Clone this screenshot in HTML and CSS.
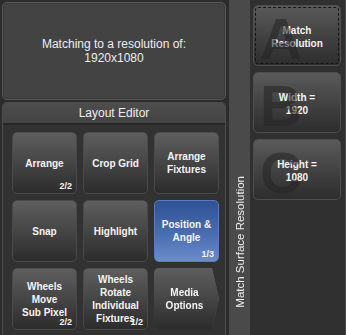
FILE: index.html
```html
<!DOCTYPE html>
<html lang="en">
<head>
    <meta charset="UTF-8">
    <title>Layout Editor</title>
    <link rel="stylesheet" href="styles.css">
</head>
<body>
<div class="screen">
    <div class="left-col">
        <div class="info-panel">
            <p>Matching to a resolution of:<br>1920x1080</p>
        </div>
        <div class="layout-panel">
            <div class="layout-head">Layout Editor</div>
            <div class="layout-grid">
                <a href="#" class="key"><span>Arrange</span><em>2/2</em></a>
                <a href="#" class="key"><span>Crop Grid</span></a>
                <a href="#" class="key"><span>Arrange<br>Fixtures</span></a>
                <a href="#" class="key"><span>Snap</span></a>
                <a href="#" class="key"><span>Highlight</span></a>
                <a href="#" class="key -active"><span>Position &amp;<br>Angle</span><em>1/3</em></a>
                <a href="#" class="key"><span>Wheels<br>Move<br>Sub Pixel</span><em>2/2</em></a>
                <a href="#" class="key"><span>Wheels<br>Rotate<br>Individual<br>Fixtures</span><em>1/2</em></a>
                <div class="key-arrow"><a href="#" class="key -more"><span>Media<br>Options</span></a></div>
            </div>
        </div>
    </div>
    <div class="side-tab"><span>Match Surface Resolution</span></div>
    <div class="soft-col">
        <a href="#" class="soft-key -focus"><b>A</b><span>Match<br>Resolution</span></a>
        <a href="#" class="soft-key"><b>B</b><span>Width =<br>1920</span></a>
        <a href="#" class="soft-key"><b>C</b><span>Height =<br>1080</span></a>
    </div>
    <div class="edge-bar"></div>
</div>
</body>
</html>
```

FILE: styles.css
```css
html, body {
    margin: 0;
    padding: 0;
}
body {
    background: #2d2d2d;
    font-family: "Liberation Sans", Arial, sans-serif;
    color: #f2f2f2;
}
a {
    color: inherit;
    text-decoration: none;
}
.screen {
    display: flex;
    width: 346px;
    height: 335px;
    overflow: hidden;
}

/* left side */
.left-col {
    width: 228px;
    flex: none;
    padding: 2px 0 0 2px;
    box-sizing: border-box;
    display: flex;
    flex-direction: column;
    gap: 2px;
}
.info-panel {
    width: 224px;
    height: 98px;
    box-sizing: border-box;
    border: 1px solid #565656;
    border-radius: 5px;
    background: #434343;
    box-shadow: inset 0 0 0 1px #3a3a3a;
    display: flex;
    align-items: center;
    justify-content: center;
    text-align: center;
}
.info-panel p {
    margin: 0;
    font-size: 12px;
    line-height: 14px;
    color: #eeeeee;
}
.layout-panel {
    width: 224px;
    flex: 1;
    box-sizing: border-box;
    border: 1px solid #4c4c4c;
    border-bottom: 0;
    border-radius: 5px 5px 0 0;
    background: #323232;
}
.layout-head {
    height: 20px;
    line-height: 20px;
    text-align: center;
    font-size: 12px;
    color: #eeeeee;
    background: linear-gradient(#4d4d4d, #434343);
    border-radius: 4px 4px 0 0;
    border-bottom: 2px solid #262626;
}
.layout-grid {
    display: grid;
    grid-template-columns: repeat(3, 65px);
    grid-auto-rows: 62px;
    column-gap: 6px;
    row-gap: 6px;
    padding: 7px 0 0 9px;
}
.key {
    display: flex;
    align-items: center;
    justify-content: center;
    position: relative;
    box-sizing: border-box;
    border: 1px solid #4a4a4a;
    border-radius: 5px;
    background: linear-gradient(#5e5e5e, #404040 60%, #2c2c2c);
    text-align: center;
    font-size: 10px;
    font-weight: bold;
    line-height: 13px;
    color: #f4f4f4;
}
.key em {
    position: absolute;
    right: 4px;
    bottom: 2px;
    font-style: normal;
    font-size: 9px;
    line-height: 10px;
}
.key.-active {
    background: linear-gradient(#2e5294, #4a6db0 55%, #6b8dcd);
    border-color: #5a7cbd;
}
.key-arrow {
    filter: drop-shadow(0 0 0.6px #5a5a5a);
}
.key-arrow .key {
    width: 65px;
    height: 62px;
    border: 0;
    clip-path: path("M5,0 H58 L65,31 L58,62 H5 Q0,62 0,57 V5 Q0,0 5,0 Z");
    padding-right: 4px;
}

/* vertical tab */
.side-tab {
    width: 22px;
    flex: none;
    box-sizing: border-box;
    border-left: 1px solid #2a2a2a;
    background: #4a4a4a;
    display: flex;
    flex-direction: column;
    justify-content: flex-end;
    align-items: center;
    padding-bottom: 27px;
}
.side-tab span {
    writing-mode: vertical-rl;
    transform: rotate(180deg);
    font-size: 11.5px;
    color: #eeeeee;
    white-space: nowrap;
}

/* soft keys */
.soft-col {
    width: 92px;
    flex: none;
    display: flex;
    flex-direction: column;
    gap: 6px;
    padding: 5px 0 0 3px;
    background: #303030;
}
.soft-key {
    display: grid;
    width: 88px;
    height: 61px;
    box-sizing: border-box;
    border: 1px solid #4e4e4e;
    border-radius: 5px;
    background: linear-gradient(#5a5a5a, #3e3e3e 60%, #2d2d2d);
    overflow: hidden;
}
.soft-key b,
.soft-key span {
    grid-area: 1 / 1;
}
.soft-key b {
    justify-self: start;
    align-self: start;
    margin: 4px 0 0 6px;
    font-size: 58px;
    line-height: 58px;
    color: #262626;
    opacity: 0.55;
}
.soft-key span {
    align-self: center;
    justify-self: center;
    text-align: center;
    font-size: 10px;
    font-weight: bold;
    line-height: 13px;
    color: #f4f4f4;
}
.soft-key.-focus {
    outline: 1px dashed #151515;
    outline-offset: -3px;
}
.edge-bar {
    width: 4px;
    flex: none;
    background: #4a4a4a;
}
```
